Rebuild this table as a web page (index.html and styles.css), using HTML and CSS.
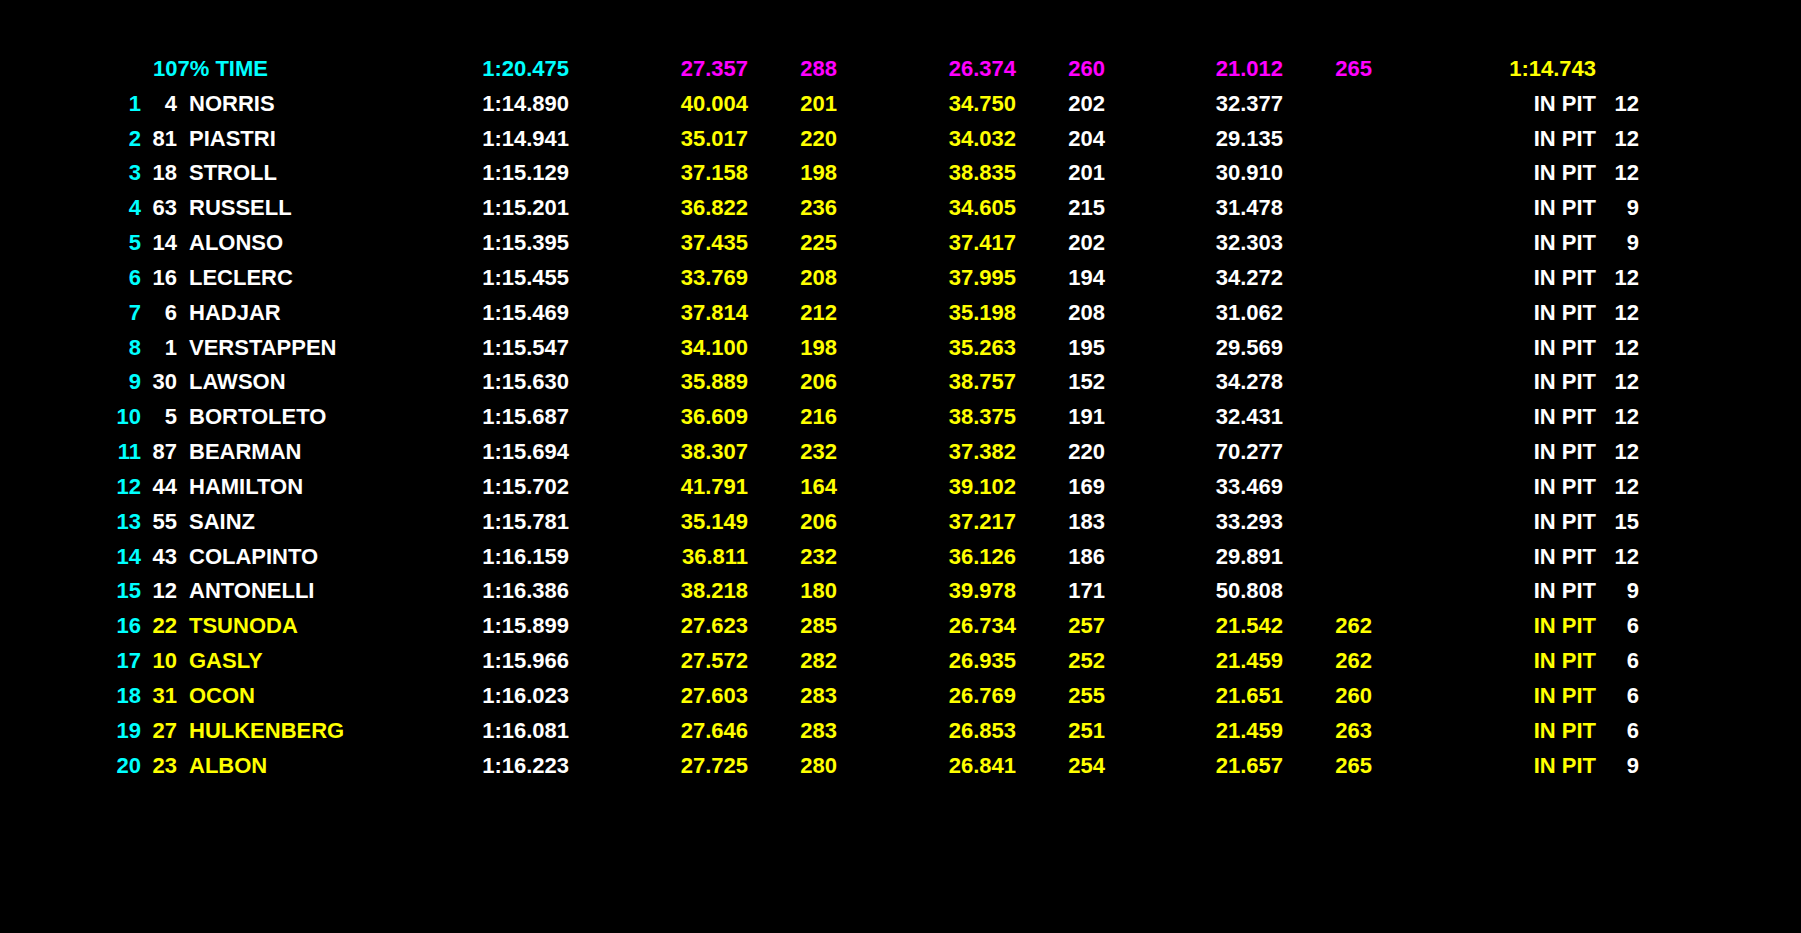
FILE: index.html
```html
<!DOCTYPE html>
<html>
<head>
<meta charset="utf-8">
<title>Timing</title>
<link rel="stylesheet" href="styles.css">
</head>
<body>
<div class="board">
  <div class="row">
    <span class="label c">107% TIME</span>
    <span class="r c">1:20.475</span>
    <span class="r m">27.357</span>
    <span class="r m">288</span>
    <span class="r m">26.374</span>
    <span class="r m">260</span>
    <span class="r m">21.012</span>
    <span class="r m">265</span>
    <span class="r y">1:14.743</span>
    <span class="r"></span>
  </div>

  <div class="row"><span class="r c">1</span><span class="r w">4</span><span class="name w">NORRIS</span><span class="r w">1:14.890</span><span class="r y">40.004</span><span class="r y">201</span><span class="r y">34.750</span><span class="r w">202</span><span class="r w">32.377</span><span class="r"></span><span class="r w">IN PIT</span><span class="r w">12</span></div>
  <div class="row"><span class="r c">2</span><span class="r w">81</span><span class="name w">PIASTRI</span><span class="r w">1:14.941</span><span class="r y">35.017</span><span class="r y">220</span><span class="r y">34.032</span><span class="r w">204</span><span class="r w">29.135</span><span class="r"></span><span class="r w">IN PIT</span><span class="r w">12</span></div>
  <div class="row"><span class="r c">3</span><span class="r w">18</span><span class="name w">STROLL</span><span class="r w">1:15.129</span><span class="r y">37.158</span><span class="r y">198</span><span class="r y">38.835</span><span class="r w">201</span><span class="r w">30.910</span><span class="r"></span><span class="r w">IN PIT</span><span class="r w">12</span></div>
  <div class="row"><span class="r c">4</span><span class="r w">63</span><span class="name w">RUSSELL</span><span class="r w">1:15.201</span><span class="r y">36.822</span><span class="r y">236</span><span class="r y">34.605</span><span class="r w">215</span><span class="r w">31.478</span><span class="r"></span><span class="r w">IN PIT</span><span class="r w">9</span></div>
  <div class="row"><span class="r c">5</span><span class="r w">14</span><span class="name w">ALONSO</span><span class="r w">1:15.395</span><span class="r y">37.435</span><span class="r y">225</span><span class="r y">37.417</span><span class="r w">202</span><span class="r w">32.303</span><span class="r"></span><span class="r w">IN PIT</span><span class="r w">9</span></div>
  <div class="row"><span class="r c">6</span><span class="r w">16</span><span class="name w">LECLERC</span><span class="r w">1:15.455</span><span class="r y">33.769</span><span class="r y">208</span><span class="r y">37.995</span><span class="r w">194</span><span class="r w">34.272</span><span class="r"></span><span class="r w">IN PIT</span><span class="r w">12</span></div>
  <div class="row"><span class="r c">7</span><span class="r w">6</span><span class="name w">HADJAR</span><span class="r w">1:15.469</span><span class="r y">37.814</span><span class="r y">212</span><span class="r y">35.198</span><span class="r w">208</span><span class="r w">31.062</span><span class="r"></span><span class="r w">IN PIT</span><span class="r w">12</span></div>
  <div class="row"><span class="r c">8</span><span class="r w">1</span><span class="name w">VERSTAPPEN</span><span class="r w">1:15.547</span><span class="r y">34.100</span><span class="r y">198</span><span class="r y">35.263</span><span class="r w">195</span><span class="r w">29.569</span><span class="r"></span><span class="r w">IN PIT</span><span class="r w">12</span></div>
  <div class="row"><span class="r c">9</span><span class="r w">30</span><span class="name w">LAWSON</span><span class="r w">1:15.630</span><span class="r y">35.889</span><span class="r y">206</span><span class="r y">38.757</span><span class="r w">152</span><span class="r w">34.278</span><span class="r"></span><span class="r w">IN PIT</span><span class="r w">12</span></div>
  <div class="row"><span class="r c">10</span><span class="r w">5</span><span class="name w">BORTOLETO</span><span class="r w">1:15.687</span><span class="r y">36.609</span><span class="r y">216</span><span class="r y">38.375</span><span class="r w">191</span><span class="r w">32.431</span><span class="r"></span><span class="r w">IN PIT</span><span class="r w">12</span></div>
  <div class="row"><span class="r c">11</span><span class="r w">87</span><span class="name w">BEARMAN</span><span class="r w">1:15.694</span><span class="r y">38.307</span><span class="r y">232</span><span class="r y">37.382</span><span class="r w">220</span><span class="r w">70.277</span><span class="r"></span><span class="r w">IN PIT</span><span class="r w">12</span></div>
  <div class="row"><span class="r c">12</span><span class="r w">44</span><span class="name w">HAMILTON</span><span class="r w">1:15.702</span><span class="r y">41.791</span><span class="r y">164</span><span class="r y">39.102</span><span class="r w">169</span><span class="r w">33.469</span><span class="r"></span><span class="r w">IN PIT</span><span class="r w">12</span></div>
  <div class="row"><span class="r c">13</span><span class="r w">55</span><span class="name w">SAINZ</span><span class="r w">1:15.781</span><span class="r y">35.149</span><span class="r y">206</span><span class="r y">37.217</span><span class="r w">183</span><span class="r w">33.293</span><span class="r"></span><span class="r w">IN PIT</span><span class="r w">15</span></div>
  <div class="row"><span class="r c">14</span><span class="r w">43</span><span class="name w">COLAPINTO</span><span class="r w">1:16.159</span><span class="r y">36.811</span><span class="r y">232</span><span class="r y">36.126</span><span class="r w">186</span><span class="r w">29.891</span><span class="r"></span><span class="r w">IN PIT</span><span class="r w">12</span></div>
  <div class="row"><span class="r c">15</span><span class="r w">12</span><span class="name w">ANTONELLI</span><span class="r w">1:16.386</span><span class="r y">38.218</span><span class="r y">180</span><span class="r y">39.978</span><span class="r w">171</span><span class="r w">50.808</span><span class="r"></span><span class="r w">IN PIT</span><span class="r w">9</span></div>
  <div class="row"><span class="r c">16</span><span class="r y">22</span><span class="name y">TSUNODA</span><span class="r w">1:15.899</span><span class="r y">27.623</span><span class="r y">285</span><span class="r y">26.734</span><span class="r y">257</span><span class="r y">21.542</span><span class="r y">262</span><span class="r y">IN PIT</span><span class="r w">6</span></div>
  <div class="row"><span class="r c">17</span><span class="r y">10</span><span class="name y">GASLY</span><span class="r w">1:15.966</span><span class="r y">27.572</span><span class="r y">282</span><span class="r y">26.935</span><span class="r y">252</span><span class="r y">21.459</span><span class="r y">262</span><span class="r y">IN PIT</span><span class="r w">6</span></div>
  <div class="row"><span class="r c">18</span><span class="r y">31</span><span class="name y">OCON</span><span class="r w">1:16.023</span><span class="r y">27.603</span><span class="r y">283</span><span class="r y">26.769</span><span class="r y">255</span><span class="r y">21.651</span><span class="r y">260</span><span class="r y">IN PIT</span><span class="r w">6</span></div>
  <div class="row"><span class="r c">19</span><span class="r y">27</span><span class="name y">HULKENBERG</span><span class="r w">1:16.081</span><span class="r y">27.646</span><span class="r y">283</span><span class="r y">26.853</span><span class="r y">251</span><span class="r y">21.459</span><span class="r y">263</span><span class="r y">IN PIT</span><span class="r w">6</span></div>
  <div class="row"><span class="r c">20</span><span class="r y">23</span><span class="name y">ALBON</span><span class="r w">1:16.223</span><span class="r y">27.725</span><span class="r y">280</span><span class="r y">26.841</span><span class="r y">254</span><span class="r y">21.657</span><span class="r y">265</span><span class="r y">IN PIT</span><span class="r w">9</span></div>
</div>
</body>
</html>
```

FILE: styles.css
```css
html, body {
  margin: 0;
  padding: 0;
  background: #000;
  height: 100%;
}

body {
  font-family: "Liberation Sans", Arial, sans-serif;
  font-weight: bold;
  font-size: 22px;
  color: #fff;
}

.board {
  display: flex;
  flex-direction: column;
  padding: 52px 0 0 100px;
}

.row {
  display: grid;
  grid-template-columns: 41px 36px 303px 89px 179px 89px 179px 89px 178px 89px 224px 43px;
  height: 34.84px;
  line-height: 34.84px;
  white-space: nowrap;
}

.r {
  text-align: right;
}

.name {
  text-align: left;
  padding-left: 12px;
}

.label {
  grid-column: 2 / span 2;
  text-align: left;
  padding-left: 12px;
}

.c { color: #00ffff; }
.m { color: #ff00ff; }
.y { color: #ffff00; }
.w { color: #ffffff; }
```
